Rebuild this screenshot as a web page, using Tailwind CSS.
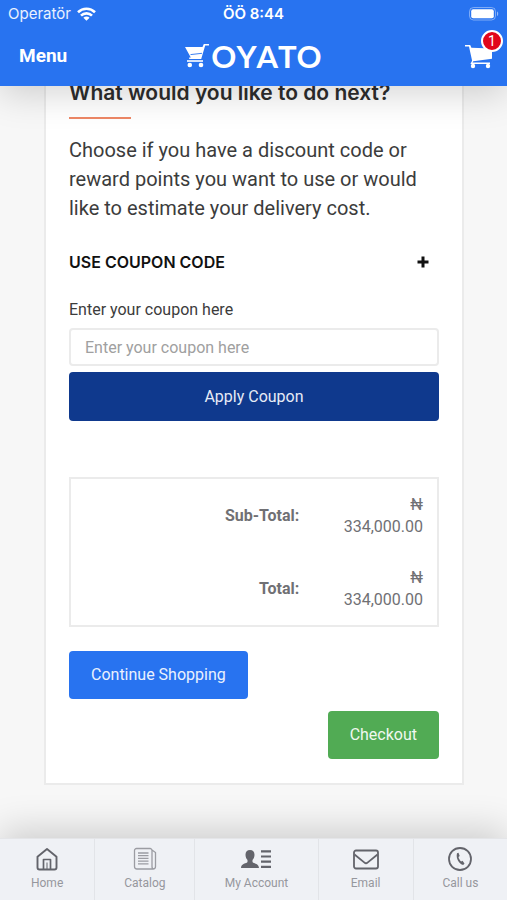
<!DOCTYPE html>
<html lang="en">
<head>
<meta charset="utf-8">
<meta name="viewport" content="width=device-width, initial-scale=1">
<title>Oyato – Shopping Cart</title>
<script src="https://cdn.jsdelivr.net/npm/@tailwindcss/browser@4"></script>
</head>
<body class="flex h-screen flex-col overflow-hidden bg-[#f7f7f7] font-[Roboto,sans-serif] text-[#3c3c3c]">

<header class="relative z-10 shrink-0 bg-[#2873f0] text-white shadow-[0_8px_36px_rgba(0,0,0,0.17)]">
  <div class="grid h-7 grid-cols-3 items-center px-2">
    <div class="flex items-center gap-[6px] font-[Inter,sans-serif] text-[15px] text-white/90">
      <span>Operatör</span>
      <svg class="h-[14px] w-[19px]" viewBox="0 0 19 14" fill="none" stroke="#fff" stroke-width="2.6" aria-hidden="true">
        <path d="M1 5.200a12.200 12.200 0 0 1 17 0"/>
        <path d="M4 8.600a7.800 7.800 0 0 1 11 0"/>
        <path d="M9.500 13.800L6.400 10.800a4.400 4.400 0 0 1 6.200 0z" fill="#fff" stroke="none"/>
      </svg>
    </div>
    <span class="text-center font-[Inter,sans-serif] text-[15px] font-semibold">ÖÖ 8:44</span>
    <svg class="h-[14px] w-[30px] justify-self-end" viewBox="0 0 30 14" aria-hidden="true">
      <rect x=".5" y=".5" width="26" height="12.500" rx="4" fill="none" stroke="#fff" stroke-opacity=".4"/>
      <rect x="2.200" y="2.200" width="22.600" height="9.100" rx="2" fill="#fff"/>
      <path d="M28 4.500c1.600.6 1.600 3.900 0 4.500z" fill="#fff" fill-opacity=".5"/>
    </svg>
  </div>
  <div class="grid h-[58px] grid-cols-3 items-center px-[14px] pb-[2px]">
    <button type="button" class="justify-self-start pl-[5px] text-[19px] font-bold">Menu</button>
    <a href="#" class="flex items-center gap-[2px] justify-self-center" aria-label="Oyato home">
      <svg class="h-6 w-6 shrink-0" viewBox="0 0 24 24" fill="#fff" aria-hidden="true">
        <path d="M0 3h17.500l1.300-3H24v1.600h-3.800l-4 13.400H4.200v-1.500h1.600z"/>
        <path d="M2 16.200h16v1.600H2z"/>
        <path d="M5.500 10.600l11.500-1.300" stroke="#2873f0" stroke-width=".9"/>
        <circle cx="4.800" cy="21" r="2.300"/><circle cx="16" cy="21" r="2.300"/>
      </svg>
      <span class="font-[Lato,sans-serif] text-[31px] leading-8 font-bold [font-kerning:none]">OYATO</span>
    </a>
    <button type="button" class="relative justify-self-end" aria-label="Cart, 1 item">
      <svg class="h-[25px] w-[28px]" viewBox="0 0 28 25" fill="#fff" aria-hidden="true">
        <path d="M0 1h5.200l1.200 2.800L27 4.500v10.300L8.300 17.200l-.8 1.300H25V20H5.400l1.700-3.300L4 2.600H0z"/>
        <circle cx="8" cy="22" r="2.200"/><circle cx="23" cy="22" r="2.200"/>
      </svg>
      <span class="absolute -top-[14px] -right-[10px] flex size-[22px] items-center justify-center rounded-full border-2 border-white bg-[#e1061b] text-sm">1</span>
    </button>
  </div>
</header>

<main class="min-h-0 flex-1 overflow-hidden pr-[43px] pl-11">
  <section class="-mt-10 border-2 border-[#ebebeb] bg-white px-[23px] pt-[31px] pb-6">
    <h1 class="font-[Inter,sans-serif] text-[21px] leading-7 font-semibold whitespace-nowrap text-[#2d2d2d]">What would you like to do next?</h1>
    <div class="mt-[10px] h-[2px] w-[62px] bg-[#ee8866]"></div>
    <p class="mt-[17px] text-xl leading-[29px]">Choose if you have a discount code or reward points you want to use or would like to estimate your delivery cost.</p>

    <button type="button" aria-expanded="true" class="mt-[27px] flex h-6 w-full items-center justify-between pr-[10px] font-[Inter,sans-serif] text-base font-semibold text-[#111]">
      <span>USE COUPON CODE</span>
      <svg class="size-3" viewBox="0 0 12 12" stroke="#111" stroke-width="3" aria-hidden="true"><path d="M6 .5v11M.5 6h11"/></svg>
    </button>

    <form>
      <label for="coupon" class="mt-6 block text-base">Enter your coupon here</label>
      <input id="coupon" type="text" placeholder="Enter your coupon here" class="mt-[6px] block h-[38px] w-full rounded border-2 border-[#ebebeb] bg-white px-[14px] text-base placeholder:text-[#a0a0a0]">
      <button type="button" class="mt-[6px] h-[49px] w-full rounded bg-[#0f398d] text-base text-[#e6ebf6]">Apply Coupon</button>
    </form>

    <table class="mt-14 w-full border-2 border-[#ebebeb] text-base leading-[22px] text-[#707074]">
      <tbody>
        <tr class="h-[74px]">
          <th scope="row" class="px-4 text-right font-bold">Sub-Total:</th>
          <td class="w-1/3 px-[14px] text-right">₦<br>334,000.00</td>
        </tr>
        <tr class="h-[74px]">
          <th scope="row" class="px-4 text-right font-bold">Total:</th>
          <td class="w-1/3 px-[14px] text-right">₦<br>334,000.00</td>
        </tr>
      </tbody>
    </table>

    <div class="mt-6 flex flex-col gap-3">
      <button type="button" class="h-12 self-start rounded bg-[#2873f0] px-[22px] text-base text-[#eaf1fe]">Continue Shopping</button>
      <button type="button" class="h-12 self-end rounded bg-[#51ab54] px-[22px] text-base text-[#f0f8f0]">Checkout</button>
    </div>
  </section>
</main>

<nav class="relative z-10 flex h-[62px] shrink-0 divide-x divide-[#e2e4e8] border-t border-[#e4e5e8] bg-[#eff1f5] text-xs text-[#96979d] shadow-[0_-8px_36px_rgba(0,0,0,0.17)]">
  <a href="#" class="flex grow-[95] basis-0 flex-col items-center gap-1 pt-2">
    <svg class="size-6" viewBox="0 0 24 24" fill="none" stroke="#63646b" stroke-width="1.900" stroke-linejoin="round" aria-hidden="true">
      <path d="M2.500 9.800L12 2l9.500 7.800V20.500a2 2 0 0 1-2 2h-15a2 2 0 0 1-2-2z"/><path d="M8.500 22.500V12.500h7v10" stroke-width="1.700"/><path d="M12 15.500v7" stroke-width="1"/>
    </svg>
    Home
  </a>
  <a href="#" class="flex grow-[100] basis-0 flex-col items-center gap-1 pt-2">
    <svg class="size-6" viewBox="0 0 24 24" fill="none" stroke="#9b9ca2" stroke-width="1.300" aria-hidden="true">
      <path d="M19 19.500V3.500a2 2 0 0 0-2-2H3.500a2 2 0 0 0-2 2v16a2.500 2.500 0 0 0 2.500 2.500h16a2.500 2.500 0 0 0 2.500-2.500V5.500L19 3M19 19.500c0 1.500.8 2.500 2 2.500"/>
      <path d="M5 6h10.500M5 8.700h10.500M5 11.400h10.500M5 14.100h10.500M5 16.800h10.500"/>
    </svg>
    Catalog
  </a>
  <a href="#" class="flex grow-[123] basis-0 flex-col items-center gap-1 pt-2">
    <svg class="h-6 w-[30px]" viewBox="0 0 30 24" fill="#63646b" aria-hidden="true">
      <path d="M9 3c3 0 4.600 2 4.500 5-.1 2.300-.9 3.800-2 4.900v2c.7 1.500 6.500 1.300 6.500 6.100H0c0-4.800 5.800-4.600 6.500-6.100v-2C5.400 11.800 4.600 10.300 4.500 8 4.400 5 6 3 9 3z"/>
      <path d="M20 3.200H30v2.200H20zM20 8.400H30v2.200H20zM20 13.600H30v2.200H20zM20 18.800H30V21H20z"/>
    </svg>
    My Account
  </a>
  <a href="#" class="flex grow-[95] basis-0 flex-col items-center gap-1 pt-2">
    <svg class="h-6 w-[26px]" viewBox="0 0 26 24" fill="none" stroke="#63646b" stroke-width="1.800" stroke-linejoin="round" aria-hidden="true">
      <rect x="1" y="3.500" width="24" height="18" rx="2"/><path d="M1.500 7.500L11.500 15.600a2.200 2.200 0 0 0 3 0L24.500 7.500"/>
    </svg>
    Email
  </a>
  <a href="#" class="flex grow-[94] basis-0 flex-col items-center gap-1 pt-2">
    <svg class="size-6" viewBox="0 0 24 24" fill="none" stroke="#63646b" stroke-width="1.800" aria-hidden="true">
      <circle cx="12" cy="12" r="11"/>
      <path d="M9 6.300l1.500-.6 1.200 3.200-1.200 1.200c.3 1.700 1.200 3.200 2.600 4.300l1.400-.6 2 2.800-1.300 1.300c-4-.6-7.600-6.500-6.200-11.600z" fill="#63646b" stroke="none"/>
    </svg>
    Call us
  </a>
</nav>
</body>
</html>
